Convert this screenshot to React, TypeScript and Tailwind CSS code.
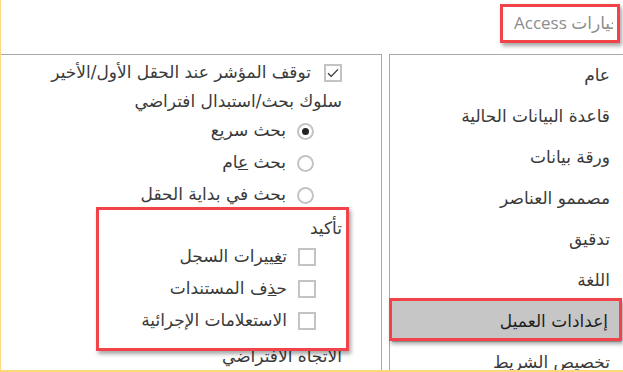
import React from 'react';

const menu = [
  'عام',
  'قاعدة البيانات الحالية',
  'ورقة بيانات',
  'مصممو العناصر',
  'تدقيق',
  'اللغة',
  'إعدادات العميل',
  'تخصيص الشريط',
];

function Check({ checked = false }: { checked?: boolean }) {
  return (
    <span className="w-[18px] h-[18px] shrink-0 border-2 border-[#c3c3c3] bg-white flex items-center justify-center">
      {checked && (
        <svg width="12" height="10" viewBox="0 0 12 10">
          <path d="M1 5.2 L4.2 8.4 L11 1.4" fill="none" stroke="#333" strokeWidth="1.3" />
        </svg>
      )}
    </span>
  );
}

function Radio({ on = false }: { on?: boolean }) {
  return (
    <span className="w-[17px] h-[17px] shrink-0 rounded-full border-2 border-[#c3c3c3] bg-white flex items-center justify-center">
      {on && <span className="w-[7px] h-[7px] rounded-full bg-[#222]" />}
    </span>
  );
}

const redBox = 'absolute border-[3px] border-[#f2434a] shadow-[2px_3px_4px_rgba(0,0,0,0.35)]';

export default function App() {
  return (
    <div
      dir="rtl"
      className="relative w-[623px] h-[372px] overflow-hidden bg-white border-l border-b-2 border-[#fcd77b] text-[#3a3a3a] text-[17px]"
      style={{ fontFamily: '"Segoe UI", "DejaVu Sans", sans-serif' }}
    >
      {/* header */}
      <div className="h-[54px] flex items-center">
        <div className="mr-[10px] overflow-hidden pb-[8px]">
          <span
            className="block -mr-[8px] text-[17px] text-[#8d8d8d] whitespace-nowrap"
            style={{ fontFamily: '"Open Sans", "DejaVu Sans", sans-serif' }}
          >
            خيارات Access
          </span>
        </div>
      </div>

      <div className="flex h-[316px]">
        {/* sidebar */}
        <div className="w-[234px] shrink-0 border-t border-l border-[#a8a8a8]">
          {menu.map((m, i) => (
            <div
              key={i}
              className={
                'h-[41px] flex items-center pr-[13px] whitespace-nowrap ' +
                (i === 6 ? 'bg-[#c6c6c6] mx-[2px] pr-[11px] text-[#1e1e1e]' : '')
              }
            >
              {m}
            </div>
          ))}
        </div>

        <div className="w-[7px] shrink-0" />

        {/* options */}
        <div className="flex-1 border-t border-r border-[#a8a8a8] pr-[39px] pt-[2px] whitespace-nowrap">
          <div className="h-[32px] flex items-center gap-[13px]">
            <Check checked />
            <span>توقف المؤشر عند الحقل الأول/الأخير</span>
          </div>
          <div className="h-[26px] flex items-center">سلوك بحث/استبدال افتراضي</div>
          <div className="pr-[28px]">
            <div className="h-[32px] flex items-center gap-[11px]">
              <Radio on />
              <span>بحث سريع</span>
            </div>
            <div className="h-[32px] flex items-center gap-[11px]">
              <Radio />
              <span>
                بحث <span className="underline">ع</span>ام
              </span>
            </div>
            <div className="h-[32px] flex items-center gap-[11px]">
              <Radio />
              <span>بحث في بداية الحقل</span>
            </div>
          </div>
          <div className="h-[30px] flex items-center pt-[6px]">تأكيد</div>
          <div className="pr-[26px]">
            <div className="h-[32px] flex items-center gap-[11px]">
              <Check />
              <span>
                ت<span className="underline">غ</span>ييرات السجل
              </span>
            </div>
            <div className="h-[32px] flex items-center gap-[11px]">
              <Check />
              <span>
                ح<span className="underline">ذ</span>ف المستندات
              </span>
            </div>
            <div className="h-[32px] flex items-center gap-[11px]">
              <Check />
              <span>الاستعلامات الإجرائية</span>
            </div>
          </div>
          <div className="h-[32px] flex items-center pt-[8px]">الاتجاه الافتراضي</div>
        </div>
      </div>

      {/* annotations */}
      <div className={redBox + ' left-[499px] top-[4px] w-[120px] h-[39px]'} />
      <div className={redBox + ' left-[388px] top-[298px] w-[233px] h-[43px]'} />
      <div className={redBox + ' left-[95px] top-[207px] w-[253px] h-[144px]'} />
    </div>
  );
}
